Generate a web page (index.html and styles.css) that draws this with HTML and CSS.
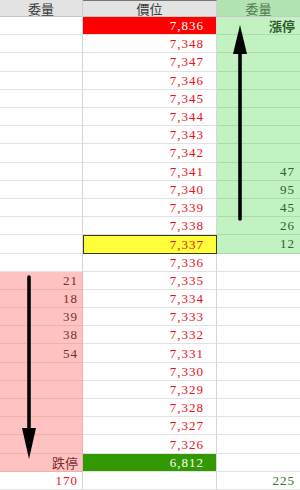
FILE: index.html
```html
<!DOCTYPE html>
<html lang="zh-Hant">
<head>
<meta charset="utf-8">
<title>五檔</title>
<link rel="stylesheet" href="styles.css">
</head>
<body>
<div class="board">
  <div class="grid">
    <div class="hd">委量</div><div class="hd hd-price">價位</div><div class="hd hd-ask">委量</div>

    <div class="c l"></div><div class="c p limit-up">7,836</div><div class="c r g cjk">漲停</div>
    <div class="c l"></div><div class="c p">7,348</div><div class="c r g"></div>
    <div class="c l"></div><div class="c p">7,347</div><div class="c r g"></div>
    <div class="c l"></div><div class="c p">7,346</div><div class="c r g"></div>
    <div class="c l"></div><div class="c p">7,345</div><div class="c r g"></div>
    <div class="c l"></div><div class="c p">7,344</div><div class="c r g"></div>
    <div class="c l"></div><div class="c p">7,343</div><div class="c r g"></div>
    <div class="c l"></div><div class="c p">7,342</div><div class="c r g"></div>
    <div class="c l"></div><div class="c p">7,341</div><div class="c r g">47</div>
    <div class="c l"></div><div class="c p">7,340</div><div class="c r g">95</div>
    <div class="c l"></div><div class="c p">7,339</div><div class="c r g">45</div>
    <div class="c l"></div><div class="c p">7,338</div><div class="c r g">26</div>
    <div class="c l"></div><div class="c p cur">7,337</div><div class="c r g">12</div>
    <div class="c l"></div><div class="c p">7,336</div><div class="c r"></div>
    <div class="c l k">21</div><div class="c p">7,335</div><div class="c r"></div>
    <div class="c l k">18</div><div class="c p">7,334</div><div class="c r"></div>
    <div class="c l k">39</div><div class="c p">7,333</div><div class="c r"></div>
    <div class="c l k">38</div><div class="c p">7,332</div><div class="c r"></div>
    <div class="c l k">54</div><div class="c p">7,331</div><div class="c r"></div>
    <div class="c l k"></div><div class="c p">7,330</div><div class="c r"></div>
    <div class="c l k"></div><div class="c p">7,329</div><div class="c r"></div>
    <div class="c l k"></div><div class="c p">7,328</div><div class="c r"></div>
    <div class="c l k"></div><div class="c p">7,327</div><div class="c r"></div>
    <div class="c l k"></div><div class="c p">7,326</div><div class="c r"></div>
    <div class="c l k cjk">跌停</div><div class="c p limit-down">6,812</div><div class="c r"></div>
    <div class="c l tot-bid">170</div><div class="c p"></div><div class="c r tot-ask">225</div>
  </div>
  <svg class="arrows" width="300" height="490" viewBox="0 0 300 490" aria-hidden="true">
    <line x1="240" y1="219" x2="240" y2="48" stroke="#000" stroke-width="3.6" stroke-linecap="round"/>
    <polygon points="240,25 233,54 247,54" fill="#000"/>
    <line x1="29" y1="277" x2="29" y2="438" stroke="#000" stroke-width="3.6" stroke-linecap="round"/>
    <polygon points="29,459 22,428 36,428" fill="#000"/>
  </svg>
</div>
</body>
</html>
```

FILE: styles.css
```css
html, body {
  margin: 0;
  padding: 0;
  background: #fff;
}

.board {
  position: relative;
  width: 300px;
  height: 490px;
  overflow: hidden;
}

.grid {
  display: grid;
  grid-template-columns: 83px 134px 83px;
  grid-template-rows: 17px repeat(26, 1fr);
  height: 490px;
  font-family: "Liberation Serif", "Noto Sans CJK TC", serif;
}

.hd {
  display: flex;
  align-items: center;
  justify-content: center;
  background: #e3e3e3;
  color: #3a3a3a;
  font-family: "Noto Sans CJK TC", sans-serif;
  font-size: 13px;
  border-right: 1px solid #cfcfcf;
  border-bottom: 1px solid #c8c8c8;
  box-sizing: border-box;
  line-height: 1;
}

.hd-price {
  border-top: 1px solid #777;
}

.hd-ask {
  background: #b3e3b3;
  color: #4f7a4f;
  border-right: none;
}

.c {
  display: flex;
  align-items: center;
  justify-content: flex-end;
  box-sizing: border-box;
  border-right: 1px solid #d6d6d6;
  border-bottom: 1px solid #e2e2e2;
  font-size: 13px;
  letter-spacing: 1px;
  line-height: 1;
}

.l {
  padding-right: 4px;
  color: #7a2b2b;
}

.p {
  padding-right: 12px;
  color: #e8101a;
}

.r {
  padding-right: 5px;
  border-right: none;
  color: #2f5e2f;
}

.g {
  background: #c2f2c2;
  border-bottom-color: #a9dca9;
}

.k {
  background: #ffc2c2;
  border-bottom-color: #efb0b0;
  border-right-color: #e5b3b3;
}

.cjk {
  font-family: "Noto Sans CJK TC", sans-serif;
  font-size: 13px;
  letter-spacing: 0;
}

.r.cjk {
  color: #2c5a2c;
  font-weight: bold;
}

.l.cjk {
  color: #7a2b2b;
}

.limit-up {
  background: #ff0000;
  color: #fff;
}

.cur {
  background: #ffff3c;
  border: 1px solid #3b3b1a;
}

.limit-down {
  background: #339900;
  color: #fff;
}

.tot-bid {
  color: #e8101a;
}

.tot-ask {
  color: #2f7a1f;
}

.arrows {
  position: absolute;
  left: 0;
  top: 0;
  pointer-events: none;
}
```
